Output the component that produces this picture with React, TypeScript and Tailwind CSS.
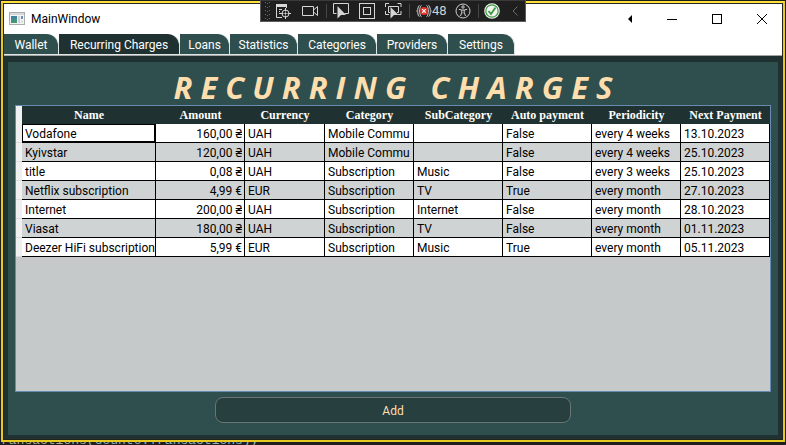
import { useState } from "react";

const UI = "font-['Roboto','Noto_Sans',sans-serif]";

const tabs = [
  { label: "Wallet", width: "w-[55px]" },
  { label: "Recurring Charges", width: "w-[121px]" },
  { label: "Loans", width: "w-[50px]" },
  { label: "Statistics", width: "w-[68px]" },
  { label: "Categories", width: "w-[79px]" },
  { label: "Providers", width: "w-[71px]" },
  { label: "Settings", width: "w-[67px]" },
];

const columns = [
  { title: "Name", width: "w-[134px]" },
  { title: "Amount", width: "w-[89px]" },
  { title: "Currency", width: "w-[80px]" },
  { title: "Category", width: "w-[89px]" },
  { title: "SubCategory", width: "w-[89px]" },
  { title: "Auto payment", width: "w-[89px]" },
  { title: "Periodicity", width: "w-[89px]" },
  { title: "Next Payment", width: "w-[89px]" },
];

const charges = [
  ["Vodafone", "160,00 ₴", "UAH", "Mobile Commu", "", "False", "every 4 weeks", "13.10.2023"],
  ["Kyivstar", "120,00 ₴", "UAH", "Mobile Commu", "", "False", "every 4 weeks", "25.10.2023"],
  ["title", "0,08 ₴", "UAH", "Subscription", "Music", "False", "every 3 weeks", "25.10.2023"],
  ["Netflix subscription", "4,99 €", "EUR", "Subscription", "TV", "True", "every month", "27.10.2023"],
  ["Internet", "200,00 ₴", "UAH", "Subscription", "Internet", "False", "every month", "28.10.2023"],
  ["Viasat", "180,00 ₴", "UAH", "Subscription", "TV", "False", "every month", "01.11.2023"],
  ["Deezer HiFi subscription", "5,99 €", "EUR", "Subscription", "Music", "True", "every month", "05.11.2023"],
];

function AppIcon() {
  return (
    <svg width="16" height="14" viewBox="0 0 16 14" aria-hidden="true">
      <defs>
        <linearGradient id="app" x1="0" y1="0" x2="0" y2="1">
          <stop offset="0" stopColor="#3f7fa8" />
          <stop offset="1" stopColor="#4c9a6c" />
        </linearGradient>
      </defs>
      <rect x="0.5" y="0.5" width="15" height="12" fill="#f4f4f4" stroke="#a9adb0" />
      <rect x="1" y="1" width="14" height="2" fill="#d5d9dc" />
      <rect x="2" y="4" width="6" height="7" fill="url(#app)" />
      <rect x="9" y="4" width="2" height="7" fill="#c9d3d6" />
      <rect x="12" y="4" width="2" height="3" fill="#6b8fb5" />
      <rect x="12" y="8" width="2" height="3" fill="#dfe3e6" />
    </svg>
  );
}

function Grip() {
  return (
    <svg width="5" height="18" viewBox="0 0 5 18" fill="#6a6a6a" aria-hidden="true">
      {[0, 4, 8, 12, 16].map((y) => (
        <g key={y}>
          <rect x="0" y={y} width="1" height="1" />
          <rect x="4" y={y} width="1" height="1" />
          <rect x="2" y={y + 1} width="1" height="1" />
        </g>
      ))}
    </svg>
  );
}

function TreeIcon() {
  return (
    <svg width="17" height="16" viewBox="0 0 17 16" fill="none" stroke="#d6d6d6" aria-hidden="true">
      <path d="M1 1h11v3H1z" fill="#d6d6d6" stroke="none" />
      <path d="M1.500 3v11.500H7M11.500 3v2" />
      <path d="M4 6.500h3M4 8.500h1M4 10.500h2" />
      <circle cx="10.500" cy="10.500" r="3.500" />
      <path d="M10.500 5v3.500M10.500 12.500V16M5 10.500h3.500M12.500 10.500H16" />
      <circle cx="10.500" cy="10.500" r="0.700" fill="#d6d6d6" />
    </svg>
  );
}

function CameraIcon() {
  return (
    <svg width="17" height="12" viewBox="0 0 17 12" fill="none" stroke="#d6d6d6" aria-hidden="true">
      <path d="M0.500 1.500h11v9H0.500zM11.500 5l4-3.500v9l-4-3.500" />
    </svg>
  );
}

function SelectIcon() {
  return (
    <svg width="17" height="16" viewBox="0 0 17 16" fill="none" stroke="#d6d6d6" aria-hidden="true">
      <path d="M3.500 10.500h-3v-10h15v10h-4" />
      <path d="M4.500 3v12.500l3.500-3.500h5z" fill="#d6d6d6" stroke="none" />
    </svg>
  );
}

function AdornerIcon() {
  return (
    <svg width="16" height="16" viewBox="0 0 16 16" fill="none" stroke="#d6d6d6" aria-hidden="true">
      <rect x="0.5" y="0.5" width="15" height="15" />
      <rect x="4.5" y="4.5" width="7" height="7" />
    </svg>
  );
}

function TrackIcon() {
  return (
    <svg width="17" height="16" viewBox="0 0 17 16" fill="none" stroke="#d6d6d6" aria-hidden="true">
      <path d="M0.500 4V0.500H4M12.500 0.500H16V4M16 8v3.500h-3M0.500 8v3.500H4" />
      <path d="M5 9.500H3.500v-6h10v6H12" />
      <path d="M5.500 4v11.500l3.500-3.500h4.500z" fill="#d6d6d6" stroke="none" />
    </svg>
  );
}

function FailureIcon() {
  return (
    <svg width="16" height="14" viewBox="0 0 16 14" fill="none" stroke="#d6d6d6" aria-hidden="true">
      <path d="M3.500 1.500C1.500 1.500 2.500 6 0.800 7c1.700 1 .7 5.500 2.700 5.500M5.500 1.500C3.500 1.500 4.500 6 3 7c1.500 1 .5 5.500 2.500 5.500M12.500 1.500c2 0 1 4.500 2.700 5.500-1.700 1-.7 5.500-2.700 5.500M10.500 1.500c2 0 1 4.500 2.500 5.500-1.500 1-.5 5.500-2.500 5.500" />
      <circle cx="8" cy="7" r="4" fill="#e0352b" stroke="none" />
      <path d="M6.200 5.200l3.600 3.600M9.800 5.200L6.200 8.800" stroke="#fff" strokeWidth="1.200" />
    </svg>
  );
}

function AccessIcon() {
  return (
    <svg width="16" height="16" viewBox="0 0 16 16" fill="none" stroke="#cfcfcf" aria-hidden="true">
      <circle cx="8" cy="8" r="7" />
      <circle cx="8" cy="4" r="1.200" />
      <path d="M3.800 6.300l3 .7v2.200L5.500 13M12.200 6.300l-3 .7v2.200l1.300 3.800M6.800 7h2.400M8 9.500v1" />
    </svg>
  );
}

function OkIcon() {
  return (
    <svg width="16" height="16" viewBox="0 0 16 16" fill="none" aria-hidden="true">
      <circle cx="8" cy="8" r="7.800" fill="#f2f2f2" />
      <circle cx="8" cy="8" r="6.200" stroke="#3a9a3f" strokeWidth="1.200" />
      <path d="M4.500 8l2.500 3 4.500-6.500" stroke="#3a9a3f" strokeWidth="1.800" />
    </svg>
  );
}

function DebugToolbar() {
  const sep = "h-3.5 w-px bg-[#474747]";
  return (
    <div className="absolute top-0 left-1/2 flex h-[22px] w-[266px] -translate-x-[133px] items-center border border-[#5c5c5c] border-t-[#3a3a3a] bg-[#1f1f1f] pl-1">
      <Grip />
      <button aria-label="Live visual tree" className="ml-[5px]"><TreeIcon /></button>
      <button aria-label="Camera" className="ml-2.5"><CameraIcon /></button>
      <span className={`ml-[7px] ${sep}`} />
      <button aria-label="Select element" className="ml-1.5"><SelectIcon /></button>
      <button aria-label="Layout adorners" className="ml-[9px]"><AdornerIcon /></button>
      <button aria-label="Track focus" className="ml-2.5"><TrackIcon /></button>
      <span className={`ml-[7px] ${sep}`} />
      <button aria-label="Binding failures" className="ml-1.5 flex items-center text-[13px] text-[#d0d0d0]">
        <FailureIcon />
        48
      </button>
      <button aria-label="Accessibility" className="ml-2"><AccessIcon /></button>
      <span className={`ml-[7px] ${sep}`} />
      <button aria-label="Hot reload" className="ml-[5px]"><OkIcon /></button>
      <button aria-label="Collapse" className="ml-3">
        <svg width="6" height="10" viewBox="0 0 6 10" fill="none" stroke="#6a6a6a" aria-hidden="true">
          <path d="M5.500 0.500L1 5l4.500 4.500" />
        </svg>
      </button>
    </div>
  );
}

function TitleBar() {
  return (
    <header className="flex h-[30px] items-center bg-white pr-[15px] pl-[5px]">
      <AppIcon />
      <span className="ml-1.5 flex-1 text-xs text-black">MainWindow</span>
      <div className="flex items-center gap-[35px]">
        <button aria-label="Back">
          <svg width="4" height="8" viewBox="0 0 4 8" aria-hidden="true"><path d="M4 0v8L0 4z" /></svg>
        </button>
        <button aria-label="Minimize">
          <svg width="10" height="10" viewBox="0 0 10 10" stroke="#000" aria-hidden="true"><path d="M0 5.500h10" /></svg>
        </button>
        <button aria-label="Maximize">
          <svg width="10" height="10" viewBox="0 0 10 10" fill="none" stroke="#000" aria-hidden="true"><rect x="0.5" y="0.5" width="9" height="9" /></svg>
        </button>
        <button aria-label="Close">
          <svg width="10" height="10" viewBox="0 0 10 10" fill="none" stroke="#000" aria-hidden="true"><path d="M0 0l10 10M10 0L0 10" /></svg>
        </button>
      </div>
    </header>
  );
}

export default function App() {
  const [active, setActive] = useState("Recurring Charges");
  return (
    <div className={`relative flex min-h-screen flex-col bg-[#1e1e1e] px-px pt-px ${UI}`}>
      <div className="flex flex-1 flex-col border-2 border-[#e6ca20] border-t-[#ffdf3a]">
        <div className="flex flex-1 flex-col border border-[#22261f]">
          <TitleBar />
          <nav className="flex h-[22px] border-b border-[#a5a5a5] bg-white" role="tablist">
            {tabs.map((tab) => (
              <button
                key={tab.label}
                role="tab"
                aria-selected={active === tab.label}
                onClick={() => setActive(tab.label)}
                className={`h-[21px] shrink-0 rounded-tr-xl border-r border-b border-[#dfe6e6] pt-px text-center text-xs whitespace-nowrap text-white ${tab.width} ${active === tab.label ? "bg-[#1f3231]" : "bg-[#2f4f4e]"}`}
              >
                {tab.label}
              </button>
            ))}
          </nav>
          <main className="flex flex-1 flex-col bg-[#1f3231] px-1 pt-1.5 pb-1">
            <div className="flex flex-1 flex-col bg-[#2f4f4e] px-[7px] pt-2 pb-3">
              <h1 className="h-[35px] text-center font-['Open_Sans','Noto_Sans',sans-serif] text-[31px] leading-[35px] font-bold whitespace-pre text-[#ffdead] italic">
                R E C U R R I N G   C H A R G E S
              </h1>
              <div className="flex-1 border border-[#688caf] bg-[#c5c9c9]">
                <table className="w-full table-fixed border-separate border-spacing-0 text-xs text-black">
                  <thead>
                    <tr className="h-[18px]">
                      <td className="w-1.5 bg-[#f0f0f0] p-0" />
                      {columns.map((c) => (
                        <th
                          key={c.title}
                          scope="col"
                          className={`bg-[#1f3231] p-0 text-center font-['Liberation_Serif',serif] leading-[18px] font-bold whitespace-nowrap text-white ${c.width}`}
                        >
                          {c.title}
                        </th>
                      ))}
                    </tr>
                  </thead>
                  <tbody>
                    {charges.map((row, r) => (
                      <tr key={row[0]} className={`h-[19px] ${r % 2 ? "bg-[#d0d3d3]" : "bg-white"}`}>
                        <td className="border-b border-[#dcdcdc] bg-[#f0f0f0] p-0" />
                        {row.map((value, c) => (
                          <td
                            key={c}
                            className={`border-r border-b border-black p-0 whitespace-nowrap ${c === 1 ? "pr-0.5 text-right" : "pl-[3px]"} ${r === 0 && c === 0 ? "shadow-[inset_0_0_0_1px_#000]" : ""}`}
                          >
                            <div className="h-[18px] overflow-hidden leading-5">{value}</div>
                          </td>
                        ))}
                      </tr>
                    ))}
                  </tbody>
                </table>
              </div>
              <button className="mt-[5px] h-[26px] w-[356px] self-center rounded-lg border border-[#6b7573] bg-[#273f3f] pt-px text-xs text-[#ffdead]">
                Add
              </button>
            </div>
          </main>
        </div>
      </div>
      <div className="flex h-[3px] items-end overflow-hidden font-['Liberation_Mono',monospace] text-[13px] whitespace-pre">
        <span className="-mb-1 leading-4 text-[#a5ad90]">ransactions<span className="text-[#86b0c8]">(counto.Transactions);</span></span>
      </div>
      <DebugToolbar />
    </div>
  );
}
